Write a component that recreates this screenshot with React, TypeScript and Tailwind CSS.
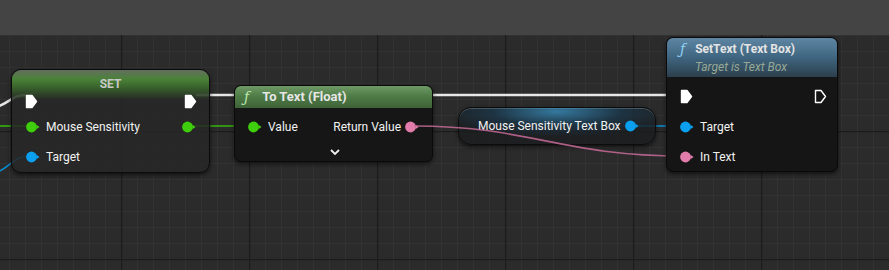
import React from "react";

type PinColor = "green" | "blue" | "pink";

const pinColors: Record<PinColor, string> = {
  green: "#3fce0b",
  blue: "#0aa0ef",
  pink: "#e27cab",
};

function DataPin({ color }: { color: PinColor }) {
  const c = pinColors[color];
  return (
    <svg width="14" height="12" viewBox="0 0 14 12" className="shrink-0">
      <circle cx="5.5" cy="6" r="5.4" fill={c} />
      <path d="M10.5 3.8 L13.5 6 L10.5 8.2 Z" fill={c} />
    </svg>
  );
}

function ExecPin({ filled }: { filled: boolean }) {
  return (
    <svg width="13" height="15" viewBox="0 0 13 15" className="shrink-0">
      <path
        d="M1.5 1.5 H7 L11.5 7.5 L7 13.5 H1.5 Z"
        fill={filled ? "#ffffff" : "none"}
        stroke="#ffffff"
        strokeWidth="1.4"
        strokeLinejoin="round"
      />
    </svg>
  );
}

function FuncIcon({ color }: { color: string }) {
  return (
    <span
      className="italic text-[14px] leading-none"
      style={{ color, fontFamily: "'DejaVu Serif', 'Liberation Serif', serif" }}
    >
      ƒ
    </span>
  );
}

function Wires() {
  return (
    <svg className="absolute inset-0" width="889" height="270">
      <defs>
        <pattern id="minor" x="9" y="3" width="16" height="16" patternUnits="userSpaceOnUse">
          <path d="M0 0.5 H16 M0.5 0 V16" stroke="#323232" strokeWidth="1" fill="none" />
        </pattern>
        <pattern id="major" x="121" y="3" width="128" height="128" patternUnits="userSpaceOnUse">
          <path d="M0 0.5 H128 M0.5 0 V128" stroke="#1c1c1c" strokeWidth="1.5" fill="none" />
        </pattern>
      </defs>
      <rect x="0" y="35" width="889" height="235" fill="#2b2b2b" />
      <rect x="0" y="35" width="889" height="235" fill="url(#minor)" />
      <rect x="0" y="35" width="889" height="235" fill="url(#major)" />

      {/* exec */}
      <path d="M-4 107 C 10 103, 12 95, 26 95" stroke="#e6e6e6" strokeWidth="2.5" fill="none" />
      <path d="M196 95 L681 95" stroke="#e6e6e6" strokeWidth="2.5" fill="none" />
      {/* float */}
      <path d="M0 126 L31 126" stroke="#37b40d" strokeWidth="1.6" fill="none" />
      <path d="M190 126 L253 126" stroke="#37b40d" strokeWidth="1.6" fill="none" />
      {/* target */}
      <path d="M-2 172 C 12 165, 14 156, 31 156" stroke="#0a8fd6" strokeWidth="1.6" fill="none" />
      <path d="M634 126 L684 126" stroke="#0a8fd6" strokeWidth="1.6" fill="none" />
    </svg>
  );
}

function PinkWire() {
  return (
    <svg className="absolute inset-0 pointer-events-none" width="889" height="270">
      <path d="M414 126 C 530 126, 560 156, 684 156" stroke="#c76b98" strokeWidth="1.6" fill="none" opacity="0.85" />
    </svg>
  );
}

export default function App() {
  return (
    <div
      className="relative w-[889px] h-[270px] overflow-hidden bg-[#444444] text-[12px] text-[#f2f2f2]"
      style={{ fontFamily: "Roboto, 'Liberation Sans', sans-serif" }}
    >
      <Wires />

      {/* SET node */}
      <div className="absolute left-[11px] top-[69px] w-[199px] h-[104px] rounded-[10px] border border-[#0b0b0b] bg-[#262726]/85 shadow-[0_2px_4px_rgba(0,0,0,0.6)] overflow-hidden">
        <div className="absolute inset-x-0 top-0 h-[30px] bg-[linear-gradient(to_bottom,#646e60_0%,#4a8238_30%,#3a662c_55%,rgba(38,39,38,0)_100%)]" />
        <div className="relative flex flex-col">
          <div className="h-[20px] pt-[6px] flex justify-center">
            <span className="font-bold text-[12px] leading-[16px] text-[#c9c9c9]">SET</span>
          </div>
          <div className="h-[22px] flex items-center justify-between pl-[13px] pr-[12px]">
            <ExecPin filled />
            <ExecPin filled />
          </div>
          <div className="h-[30px] flex items-center pl-[14px] pr-[13px]">
            <DataPin color="green" />
            <span className="ml-[6px] flex-1">Mouse Sensitivity</span>
            <DataPin color="green" />
          </div>
          <div className="h-[30px] flex items-center pl-[14px]">
            <DataPin color="blue" />
            <span className="ml-[6px]">Target</span>
          </div>
        </div>
      </div>

      {/* To Text node */}
      <div className="absolute left-[234px] top-[85px] w-[199px] h-[77px] rounded-[7px] border border-[#0a0a0a] bg-[#151615] shadow-[0_2px_4px_rgba(0,0,0,0.6)] overflow-hidden">
        <div className="h-[22px] flex items-center pl-[9px] gap-[13px] bg-[linear-gradient(to_bottom,#6f9a66,#4f7c47_45%,#3d6237)]">
          <FuncIcon color="#b9e7ad" />
          <span className="font-bold text-[13px] text-[#e6e6e6]">To Text (Float)</span>
        </div>
        <div className="mt-[4px] h-[30px] flex items-center pl-[13px] pr-[13px]">
          <DataPin color="green" />
          <span className="ml-[6px] flex-1">Value</span>
          <span className="mr-[4px]">Return Value</span>
          <DataPin color="pink" />
        </div>
        <div className="h-[20px] flex items-center justify-center pl-[2px]">
          <svg width="12" height="8" viewBox="0 0 12 8">
            <path d="M2 2 L6 6 L10 2" stroke="#f0f0f0" strokeWidth="1.8" fill="none" />
          </svg>
        </div>
      </div>

      {/* Mouse Sensitivity Text Box pill */}
      <div className="absolute left-[458px] top-[107px] w-[198px] h-[38px] rounded-[13px] border border-[#0c0c0c] bg-[#1a1d1f]/80 shadow-[0_2px_4px_rgba(0,0,0,0.6),inset_0_1px_0_rgba(150,150,150,0.45)] overflow-hidden">
        <div className="absolute inset-0 bg-[radial-gradient(ellipse_60%_70%_at_50%_10%,rgba(60,150,200,0.75),rgba(30,90,130,0.35)_55%,rgba(0,0,0,0)_100%)]" />
        <div className="relative h-full flex items-center pl-[19px] pr-[16px]">
          <span className="flex-1 text-[12px]">Mouse Sensitivity Text Box</span>
          <DataPin color="blue" />
        </div>
      </div>

      <PinkWire />

      {/* SetText node */}
      <div className="absolute left-[666px] top-[37px] w-[172px] h-[135px] rounded-[7px] border border-[#0a0a0a] bg-[#141514] shadow-[0_2px_4px_rgba(0,0,0,0.6)] overflow-hidden">
        <div className="h-[39px] flex flex-col pl-[13px] pt-[2px] bg-[linear-gradient(to_bottom,#5e86a3,#3f6580_50%,#2c3f4c)]">
          <div className="flex items-center gap-[10px] h-[18px]">
            <FuncIcon color="#8fd0f5" />
            <span className="font-bold text-[12px] text-[#e4e4e4]">SetText (Text Box)</span>
          </div>
          <span className="pl-[15px] italic text-[12px] leading-[18px] text-[#97a995]">Target is Text Box</span>
        </div>
        <div className="mt-[7px] h-[24px] flex items-center justify-between pl-[13px] pr-[10px]">
          <ExecPin filled />
          <ExecPin filled={false} />
        </div>
        <div className="mt-[4px] h-[30px] flex items-center pl-[13px]">
          <DataPin color="blue" />
          <span className="ml-[6px]">Target</span>
        </div>
        <div className="h-[30px] flex items-center pl-[13px]">
          <DataPin color="pink" />
          <span className="ml-[6px]">In Text</span>
        </div>
      </div>
    </div>
  );
}
